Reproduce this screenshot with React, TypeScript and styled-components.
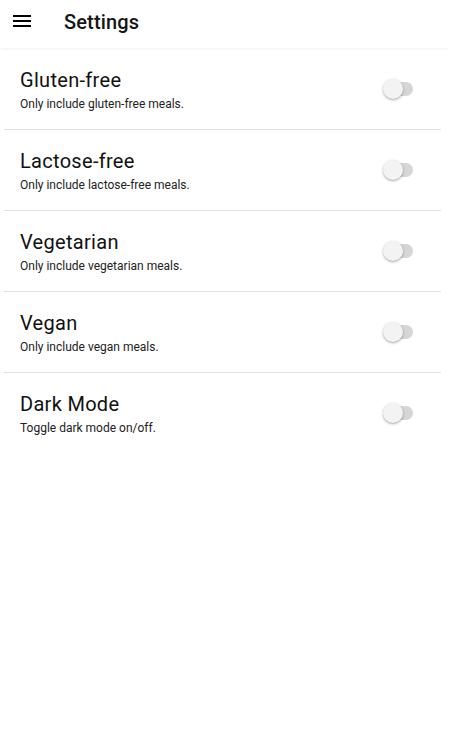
import React from "react";
import styled, { createGlobalStyle } from "styled-components";

const Global = createGlobalStyle`
  html, body { margin: 0; padding: 0; background: #ffffff; }
  body { font-family: Roboto, "Noto Sans", Arial, sans-serif; color: #000; }
`;

const Page = styled.div`
  width: 449px;
  min-height: 732px;
  background: #fff;
  display: flex;
  flex-direction: column;
`;

const Header = styled.header`
  height: 48px;
  display: flex;
  align-items: center;
  background: #fff;
  box-shadow: 0 2px 3px -1px rgba(0, 0, 0, 0.06);
  position: relative;
  z-index: 1;
`;

const MenuButton = styled.button`
  width: 24px;
  height: 24px;
  margin-left: 10px;
  margin-top: -6px;
  padding: 0;
  border: 0;
  background: transparent;
  display: flex;
  align-items: center;
  justify-content: center;
`;

const Title = styled.h1`
  margin: -4px 0 0 30px;
  font-size: 20px;
  font-weight: 500;
  letter-spacing: 0.15px;
  color: #151515;
`;

const List = styled.ul`
  list-style: none;
  margin: 1px 8px 0 4px;
  padding: 0;
`;

const Row = styled.li<{ $last?: boolean }>`
  height: 80px;
  border-bottom: ${(p) => (p.$last ? "none" : "1px solid #e0e0e0")};
  display: flex;
  align-items: center;
  padding: 0 28px 0 16px;
`;

const TextBlock = styled.div`
  flex: 1;
  display: flex;
  flex-direction: column;
  margin-top: 2px;
`;

const ItemTitle = styled.div`
  font-size: 20px;
  line-height: 24px;
  color: #111;
  letter-spacing: 0.3px;
`;

const ItemSub = styled.div`
  margin-top: 4px;
  font-size: 12px;
  line-height: 16px;
  color: #222;
`;

const SwitchWrap = styled.div`
  position: relative;
  width: 30px;
  height: 20px;
  flex: none;
`;

const Track = styled.div`
  position: absolute;
  left: 2px;
  right: 0;
  top: 3px;
  height: 14px;
  border-radius: 7px;
  background: #d6d6d6;
`;

const Thumb = styled.div`
  position: absolute;
  left: 0;
  top: 0;
  width: 20px;
  height: 20px;
  border-radius: 50%;
  background: #f3f3f3;
  box-shadow: 0 1px 3px rgba(0, 0, 0, 0.28), 0 1px 1px rgba(0, 0, 0, 0.1);
`;

const Switch = () => (
  <SwitchWrap>
    <Track />
    <Thumb />
  </SwitchWrap>
);

const items = [
  { title: "Gluten-free", sub: "Only include gluten-free meals." },
  { title: "Lactose-free", sub: "Only include lactose-free meals." },
  { title: "Vegetarian", sub: "Only include vegetarian meals." },
  { title: "Vegan", sub: "Only include vegan meals." },
  { title: "Dark Mode", sub: "Toggle dark mode on/off." },
];

export default function App() {
  return (
    <>
      <Global />
      <Page>
        <Header>
          <MenuButton aria-label="menu">
            <svg width="24" height="24" viewBox="0 0 24 24">
              <path d="M3 18h18v-2H3v2zm0-5h18v-2H3v2zm0-7v2h18V6H3z" fill="#000" />
            </svg>
          </MenuButton>
          <Title>Settings</Title>
        </Header>
        <List>
          {items.map((it, i) => (
            <Row key={it.title} $last={i === items.length - 1}>
              <TextBlock>
                <ItemTitle>{it.title}</ItemTitle>
                <ItemSub>{it.sub}</ItemSub>
              </TextBlock>
              <Switch />
            </Row>
          ))}
        </List>
      </Page>
    </>
  );
}
